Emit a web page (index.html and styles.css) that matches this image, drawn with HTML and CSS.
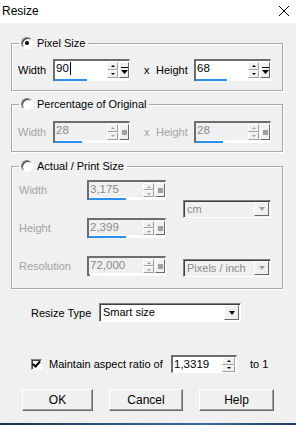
FILE: index.html
```html
<!DOCTYPE html>
<html lang="en">

<head>
    <meta charset="UTF-8">
    <meta name="viewport" content="width=device-width, initial-scale=1.0">
    <title>Resize</title>
    <link rel="stylesheet" href="styles.css">
</head>

<body>
    <div class="window">
        <div class="titlebar">
            <span class="title">Resize</span>
            <svg class="close" width="12" height="12" viewBox="0 0 12 12">
                <path d="M1 1L11 11M11 1L1 11" stroke="#000" stroke-width="1" fill="none" />
            </svg>
        </div>

        <div class="dialog">
            <fieldset class="group g1">
                <legend><span class="radio checked"></span>Pixel Size</legend>
                <div class="pair-row">
                    <span class="lbl">Width</span>
                    <div class="spin">
                        <div class="spin-main">
                            <span class="spin-val">90<span class="caret"></span></span>
                            <span class="spin-arrows"><b class="arr up"></b><b class="arr down"></b></span>
                            <span class="spin-drop">
                                <svg width="7" height="7" viewBox="0 0 7 7"><path d="M0 0h7v1H0zM0 3h7L3.5 7z" fill="#000" /></svg>
                            </span>
                        </div>
                        <div class="spin-track"><i style="width:32px"></i></div>
                    </div>
                    <span class="times">x</span>
                    <span class="lbl2">Height</span>
                    <div class="spin">
                        <div class="spin-main">
                            <span class="spin-val">68</span>
                            <span class="spin-arrows"><b class="arr up"></b><b class="arr down"></b></span>
                            <span class="spin-drop">
                                <svg width="7" height="7" viewBox="0 0 7 7"><path d="M0 0h7v1H0zM0 3h7L3.5 7z" fill="#000" /></svg>
                            </span>
                        </div>
                        <div class="spin-track"><i style="width:31px"></i></div>
                    </div>
                </div>
            </fieldset>

            <fieldset class="group g2 off">
                <legend><span class="radio"></span>Percentage of Original</legend>
                <div class="pair-row">
                    <span class="lbl">Width</span>
                    <div class="spin">
                        <div class="spin-main">
                            <span class="spin-val">28</span>
                            <span class="spin-arrows"><b class="arr up"></b><b class="arr down"></b></span>
                            <span class="spin-drop"><span class="dot"></span></span>
                        </div>
                        <div class="spin-track"><i style="width:27px"></i></div>
                    </div>
                    <span class="times">x</span>
                    <span class="lbl2">Height</span>
                    <div class="spin">
                        <div class="spin-main">
                            <span class="spin-val">28</span>
                            <span class="spin-arrows"><b class="arr up"></b><b class="arr down"></b></span>
                            <span class="spin-drop"><span class="dot"></span></span>
                        </div>
                        <div class="spin-track"><i style="width:27px"></i></div>
                    </div>
                </div>
            </fieldset>

            <fieldset class="group g3 off">
                <legend><span class="radio"></span>Actual / Print Size</legend>
                <div class="print-grid">
                    <span class="lbl r1">Width</span>
                    <div class="spin wide r1">
                        <div class="spin-main">
                            <span class="spin-val">3,175</span>
                            <span class="spin-arrows"><b class="arr up"></b><b class="arr down"></b></span>
                            <span class="spin-drop"><span class="dot"></span></span>
                        </div>
                        <div class="spin-track"><i style="width:37px"></i></div>
                    </div>
                    <div class="select unit">
                        <span class="select-val">cm</span>
                        <span class="select-btn"><span class="tri"></span></span>
                    </div>

                    <span class="lbl r2">Height</span>
                    <div class="spin wide r2">
                        <div class="spin-main">
                            <span class="spin-val">2,399</span>
                            <span class="spin-arrows"><b class="arr up"></b><b class="arr down"></b></span>
                            <span class="spin-drop"><span class="dot"></span></span>
                        </div>
                        <div class="spin-track"><i style="width:37px"></i></div>
                    </div>

                    <span class="lbl r3">Resolution</span>
                    <div class="spin wide r3">
                        <div class="spin-main">
                            <span class="spin-val">72,000</span>
                            <span class="spin-arrows"><b class="arr up"></b><b class="arr down"></b></span>
                            <span class="spin-drop"><span class="dot"></span></span>
                        </div>
                        <div class="spin-track"><i style="width:1px"></i></div>
                    </div>
                    <div class="select res r3">
                        <span class="select-val">Pixels / inch</span>
                        <span class="select-btn"><span class="tri"></span></span>
                    </div>
                </div>
            </fieldset>

            <div class="type-row">
                <span class="type-lbl">Resize Type</span>
                <div class="select type">
                    <span class="select-val">Smart size</span>
                    <span class="select-btn"><span class="tri"></span></span>
                </div>
            </div>

            <div class="ratio-row">
                <span class="check">
                    <svg width="9" height="9" viewBox="0 0 9 9"><path d="M1 4l2.5 2.5L8 1.5" stroke="#000" stroke-width="2" fill="none" /></svg>
                </span>
                <span class="ratio-lbl">Maintain aspect ratio of</span>
                <div class="ratio-input">
                    <span class="spin-val">1,3319</span>
                    <span class="spin-arrows"><b class="arr up"></b><b class="arr down"></b></span>
                </div>
                <span class="to-one">to 1</span>
            </div>

            <div class="buttons">
                <button class="btn">OK</button>
                <button class="btn">Cancel</button>
                <button class="btn">Help</button>
            </div>
        </div>
        <div class="desktop"></div>
    </div>
</body>

</html>
```

FILE: styles.css
```css
* {
    margin: 0;
    padding: 0;
    box-sizing: border-box;
}

body {
    font-family: "Liberation Sans", Arial, sans-serif;
    font-size: 11px;
    color: #000;
    background: #f0f0f0;
    white-space: nowrap;
}

.window {
    width: 296px;
    height: 425px;
    display: flex;
    flex-direction: column;
    background: #f0f0f0;
}

.titlebar {
    height: 23px;
    background: #fff;
    display: flex;
    align-items: center;
    justify-content: space-between;
    padding: 0 6px 2px 2px;
}

.title {
    font-size: 12px;
}

.dialog {
    padding: 13px 0 0 11px;
}

/* group boxes */
.group {
    width: 272px;
    border: 1px solid #a9a9a9;
    box-shadow: 1px 1px 0 #fff, inset 1px 1px 0 #fff;
    padding: 9px 6px 9px 6px;
}

.g2 {
    margin-top: 6px;
    padding-top: 10px;
    padding-bottom: 8px;
}

.g3 {
    margin-top: 7px;
    padding-top: 7px;
    padding-bottom: 12px;
}

.group legend {
    display: flex;
    align-items: center;
    height: 14px;
    padding: 0 3px 0 2px;
    margin-left: 1px;
    font-weight: normal;
}

.radio {
    width: 12px;
    height: 12px;
    border-radius: 50%;
    background: #fff;
    border: 1px solid;
    border-color: #808080 #fff #fff #808080;
    box-shadow: inset 1px 1px 0 #404040;
    margin-right: 4px;
    display: flex;
    align-items: center;
    justify-content: center;
}

.radio.checked::after {
    content: "";
    width: 4px;
    height: 4px;
    border-radius: 50%;
    background: #000;
}

.off .lbl,
.off .lbl2,
.off .times {
    color: #a3a3a3;
}

.pair-row {
    display: flex;
    align-items: center;
}

.lbl {
    width: 35px;
}

.times {
    width: 26px;
    padding-left: 14px;
}

.lbl2 {
    width: 38px;
}

/* spin boxes */
.spin {
    width: 77px;
    height: 22px;
    display: flex;
    flex-direction: column;
    border-style: solid;
    border-width: 2px 1px 0 2px;
    border-color: #6d6d6d #fff #fff #6d6d6d;
    background: #fff;
}

.spin.wide {
    width: 79px;
    height: 20px;
}

.spin-main {
    flex: 1;
    display: flex;
    background: #fff;
}

.off .spin-main {
    background: #f0f0f0;
    color: #8a8a8a;
}

.spin-val {
    flex: 1;
    padding: 1px 0 0 1px;
    font-size: 11.5px;
    line-height: 13px;
    display: flex;
    align-items: flex-start;
}

.caret {
    width: 1px;
    height: 13px;
    background: #000;
    margin-left: 1px;
}

.spin-arrows {
    width: 12px;
    display: flex;
    flex-direction: column;
    padding: 1px 1px 0 0;
}

.arr {
    flex: 1;
    background: #f0f0f0;
    border: 1px solid;
    border-color: #fff #a0a0a0 #a0a0a0 #fff;
    display: flex;
    align-items: center;
    justify-content: center;
}

.arr::after {
    content: "";
    border-left: 2px solid transparent;
    border-right: 2px solid transparent;
}

.arr.up::after {
    border-bottom: 2px solid #000;
}

.arr.down::after {
    border-top: 2px solid #000;
}

.off .arr.up::after {
    border-bottom-color: #a0a0a0;
}

.off .arr.down::after {
    border-top-color: #a0a0a0;
}

.spin-drop {
    width: 10px;
    margin-top: 1px;
    background: #f0f0f0;
    border: 1px solid;
    border-color: #fff #696969 #696969 #fff;
    display: flex;
    align-items: center;
    justify-content: center;
}

.dot {
    width: 5px;
    height: 5px;
    background: #a0a0a0;
}

.spin-track {
    height: 3px;
    background: #fff;
    padding-top: 1px;
}

.spin-track i {
    display: block;
    height: 2px;
    background: #2b8ff0;
}

/* print size grid */
.print-grid {
    display: grid;
    grid-template-columns: 51px 79px 88px;
    grid-template-rows: 20px 20px 20px;
    row-gap: 18px;
    column-gap: 17px;
    align-items: center;
    padding-left: 1px;
}

.r1 {
    grid-row: 1;
}

.r2 {
    grid-row: 2;
}

.r3 {
    grid-row: 3;
}

.print-grid .lbl {
    width: auto;
}

.unit {
    grid-column: 3;
    grid-row: 1 / 3;
}

.res {
    grid-column: 3;
    margin-top: 4px;
}

/* dropdowns */
.select {
    height: 18px;
    display: flex;
    align-items: stretch;
    border-style: solid;
    border-width: 1px;
    border-color: #808080 #fff #fff #808080;
    box-shadow: inset 1px 1px 0 #404040;
    background: #fff;
    padding: 1px 1px 1px 2px;
}

.off .select {
    background: #f0f0f0;
    color: #8a8a8a;
}

.select-val {
    flex: 1;
    font-size: 11px;
    line-height: 14px;
    padding-left: 1px;
}

.select-btn {
    width: 15px;
    background: #f0f0f0;
    border: 1px solid;
    border-color: #fff #696969 #696969 #fff;
    display: flex;
    align-items: center;
    justify-content: center;
}

.tri {
    border-left: 3px solid transparent;
    border-right: 3px solid transparent;
    border-top: 4px solid #000;
}

.off .tri {
    border-top-color: #a0a0a0;
}

.type-row {
    display: flex;
    align-items: center;
    margin-top: 14px;
    padding-left: 20px;
}

.type-lbl {
    width: 68px;
}

.select.type {
    width: 142px;
    height: 19px;
}

/* ratio row */
.ratio-row {
    display: flex;
    align-items: center;
    margin-top: 33px;
    padding-left: 20px;
}

.check {
    width: 11px;
    height: 11px;
    background: #fff;
    border: 1px solid;
    border-color: #808080 #fff #fff #808080;
    box-shadow: inset 1px 1px 0 #404040;
    display: flex;
    align-items: center;
    justify-content: center;
}

.ratio-lbl {
    width: 129px;
    padding-left: 7px;
}

.ratio-input {
    width: 66px;
    height: 18px;
    display: flex;
    background: #fff;
    border-style: solid;
    border-width: 2px 1px 1px 2px;
    border-color: #6d6d6d #fff #fff #6d6d6d;
}

.ratio-input .spin-arrows {
    width: 14px;
    padding: 0 1px 0 0;
}

.to-one {
    margin-left: 13px;
}

/* buttons */
.buttons {
    display: grid;
    grid-template-columns: 71px 74px 75px;
    column-gap: 16px;
    margin-top: 16px;
    padding-left: 11px;
}

.btn {
    height: 22px;
    font-family: "Liberation Sans", Arial, sans-serif;
    font-size: 12px;
    background: #f0f0f0;
    border: 1px solid;
    border-color: #fff #696969 #696969 #fff;
    box-shadow: inset -1px -1px 0 #a0a0a0;
    color: #000;
}

.desktop {
    margin-top: auto;
    height: 2px;
    background: linear-gradient(90deg, #1b3349, #2a5a86 40%, #3a6e9e 70%, #1c3c5c);
}
```
